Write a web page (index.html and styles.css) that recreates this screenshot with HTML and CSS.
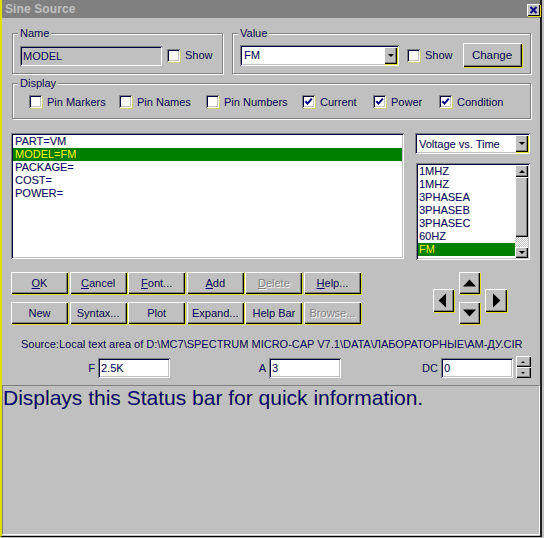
FILE: index.html
```html
<!DOCTYPE html>
<html>
<head>
<meta charset="utf-8">
<title>Sine Source</title>
<link rel="stylesheet" href="styles.css">
</head>
<body>
<div class="window">
  <div class="titlebar">
    <span class="title">Sine Source</span>
    <span class="close"><svg width="13" height="12" viewBox="0 0 13 12"><path d="M3.5 3 L9.5 9 M9.5 3 L3.5 9" stroke="#000080" stroke-width="2" fill="none"/></svg></span>
  </div>
  <div class="content">
    <div class="top-row">
      <div class="group name-group">
        <span class="legend">Name</span>
        <div class="group-body">
          <div class="field readonly name-field">MODEL</div>
          <span class="check"><span class="box"></span>Show</span>
        </div>
      </div>
      <div class="group value-group">
        <span class="legend">Value</span>
        <div class="group-body">
          <div class="combo value-combo"><span class="combo-text">FM</span><span class="drop"><span class="tri"></span></span></div>
          <span class="check value-check"><span class="box"></span>Show</span>
          <div class="btn change-btn">Change</div>
        </div>
      </div>
    </div>
    <div class="group display-group">
      <span class="legend">Display</span>
      <div class="display-checks">
        <span class="check"><span class="box"></span>Pin Markers</span>
        <span class="check"><span class="box"></span>Pin Names</span>
        <span class="check"><span class="box"></span>Pin Numbers</span>
        <span class="check"><span class="box checked"><svg width="13" height="13" viewBox="0 0 13 13"><path d="M3.3 6.2 L5.5 8.6 L9.8 3.6" stroke="#000080" stroke-width="2" fill="none"/></svg></span>Current</span>
        <span class="check"><span class="box checked"><svg width="13" height="13" viewBox="0 0 13 13"><path d="M3.3 6.2 L5.5 8.6 L9.8 3.6" stroke="#000080" stroke-width="2" fill="none"/></svg></span>Power</span>
        <span class="check"><span class="box checked"><svg width="13" height="13" viewBox="0 0 13 13"><path d="M3.3 6.2 L5.5 8.6 L9.8 3.6" stroke="#000080" stroke-width="2" fill="none"/></svg></span>Condition</span>
      </div>
    </div>
    <div class="mid-row">
      <div class="listbox main-list">
        <div class="item">PART=VM</div>
        <div class="item sel">MODEL=FM</div>
        <div class="item">PACKAGE=</div>
        <div class="item">COST=</div>
        <div class="item">POWER=</div>
      </div>
      <div class="right-col">
        <div class="combo plot-combo"><span class="combo-text">Voltage vs. Time</span><span class="drop"><span class="tri"></span></span></div>
        <div class="listbox model-list">
          <div class="model-items">
            <div class="item">1MHZ</div>
            <div class="item">1MHZ</div>
            <div class="item">3PHASEA</div>
            <div class="item">3PHASEB</div>
            <div class="item">3PHASEC</div>
            <div class="item">60HZ</div>
            <div class="item sel">FM</div>
            <div class="item">GENERAL</div>
          </div>
          <div class="scrollbar">
            <div class="sb-btn sb-up"><span class="tri tri-up"></span></div>
            <div class="sb-thumb"></div>
            <div class="sb-track"></div>
            <div class="sb-btn sb-down"><span class="tri"></span></div>
          </div>
        </div>
      </div>
    </div>
    <div class="btn-row">
      <div class="btn-grid">
        <div class="btn"><u>O</u>K</div>
        <div class="btn"><u>C</u>ancel</div>
        <div class="btn"><u>F</u>ont...</div>
        <div class="btn"><u>A</u>dd</div>
        <div class="btn disabled"><u>D</u>elete</div>
        <div class="btn"><u>H</u>elp...</div>
        <div class="btn">New</div>
        <div class="btn">Syntax...</div>
        <div class="btn">Plot</div>
        <div class="btn">Expand...</div>
        <div class="btn">Help Bar</div>
        <div class="btn disabled">Browse...</div>
      </div>
      <div class="arrows">
        <div class="btn arrow side"><svg width="21" height="23" viewBox="0 0 21 23"><polygon points="5.5,11.5 13,4.5 13,18.5" fill="#000"/></svg></div>
        <div class="arrow-col">
          <div class="btn arrow"><svg width="21" height="22" viewBox="0 0 21 22"><polygon points="4,14.5 17,14.5 10.5,7.5" fill="#000"/></svg></div>
          <div class="btn arrow"><svg width="21" height="22" viewBox="0 0 21 22"><polygon points="4,7.5 17,7.5 10.5,14.5" fill="#000"/></svg></div>
        </div>
        <div class="btn arrow side"><svg width="22" height="23" viewBox="0 0 22 23"><polygon points="15.5,11.5 8,4.5 8,18.5" fill="#000"/></svg></div>
      </div>
    </div>
    <div class="source">Source:Local text area of D:\MC7\SPECTRUM MICRO-CAP V7.1\DATA\ЛАБОРАТОРНЫЕ\АМ-ДУ.CIR</div>
    <div class="params">
      <div class="param param-f"><span class="plabel">F</span><div class="field pfield">2.5K</div></div>
      <div class="param param-a"><span class="plabel">A</span><div class="field pfield">3</div></div>
      <div class="param param-dc"><span class="plabel">DC</span><div class="field pfield">0</div>
        <div class="spinner">
          <div class="spin-btn"><span class="tri-s tri-s-up"></span></div>
          <div class="spin-btn"><span class="tri-s"></span></div>
        </div>
      </div>
    </div>
  </div>
  <div class="status">Displays this Status bar for quick information.</div>
</div>
</body>
</html>
```

FILE: styles.css
```css
* { box-sizing: border-box; }
html, body { margin: 0; padding: 0; }
body {
  width: 544px;
  height: 538px;
  overflow: hidden;
  background: #c0c0c0;
  font-family: "Liberation Sans", Arial, sans-serif;
  font-size: 11px;
  color: #000080;
}
.window {
  width: 542px;
  border-left: 2px solid #e0e000;
  border-right: 2px solid #202020;
  border-bottom: 1px solid #000;
  display: flex;
  flex-direction: column;
  text-shadow: 1px 0 0 rgba(230, 230, 0, 0.5);
}
.titlebar {
  height: 18px;
  background: #808080;
  display: flex;
  align-items: center;
  justify-content: space-between;
  padding: 0 0 0 3px;
}
.title {
  font-weight: bold;
  font-size: 12px;
  color: #c0c0c0;
  text-shadow: none;
  letter-spacing: 0.1px;
}
.close {
  width: 13px;
  height: 12px;
  margin-top: 2px;
  background: #c0c0c0;
  box-shadow: inset 1px 1px 0 #fff, inset -1px -1px 0 #000, 1px 1px 0 #e0e000;
  display: flex;
}
.content {
  padding: 15px 0 0 9px;
}

/* raised & sunken */
.btn {
  background: #c0c0c0;
  box-shadow: inset 1px 1px 0 #fff, inset -1px -1px 0 #000, inset -2px -2px 0 #808080, 1px 1px 0 rgba(230,230,0,0.8);
  display: flex;
  align-items: center;
  justify-content: center;
  height: 22px;
  white-space: nowrap;
}
.btn.disabled {
  color: #808080;
  text-shadow: 1px 1px 0 #fff;
}
.field, .listbox, .combo {
  box-shadow: inset 1px 1px 0 #808080, inset -1px -1px 0 #fff, inset 2px 2px 0 #000040, inset -2px -2px 0 #c0c0c0;
  background: #fff;
}

/* groups */
.group {
  border: 1px solid #808080;
  box-shadow: inset 1px 1px 0 #fff, 1px 1px 0 #fff;
  padding: 0 6px 0 7px;
}
.legend {
  display: block;
  width: fit-content;
  margin: -7px 0 0 -2px;
  padding: 0 2px;
  line-height: 13px;
  background: #c0c0c0;
}
.top-row {
  display: flex;
}
.name-group {
  width: 211px;
  margin-left: 1px;
  padding-bottom: 6px;
}
.value-group {
  width: 299px;
  margin-left: 9px;
  padding-bottom: 6px;
}
.group-body {
  display: flex;
  align-items: center;
  height: 24px;
  margin-top: 3px;
}
.name-field {
  width: 142px;
  height: 20px;
  margin-top: 2px;
  background: #c0c0c0;
  padding: 0 0 0 3px;
  line-height: 20px;
}
.check {
  display: flex;
  align-items: center;
  white-space: nowrap;
}
.name-group .check { margin-left: 5px; }
.box {
  width: 13px;
  height: 13px;
  flex: none;
  margin-right: 5px;
  background: #fff;
  box-shadow: inset 1px 1px 0 #808080, inset -1px -1px 0 #fff, inset 2px 2px 0 #000040, inset -2px -2px 0 #c0c0c0, 1px 1px 0 rgba(230,230,0,0.4);
  display: flex;
}
.combo {
  display: flex;
  align-items: center;
  justify-content: space-between;
  padding: 2px;
}
.combo-text {
  padding-left: 2px;
}
.value-combo {
  width: 159px;
  height: 21px;
}
.drop {
  width: 13px;
  height: 17px;
  background: #c0c0c0;
  box-shadow: inset 1px 1px 0 #fff, inset -1px -1px 0 #000, inset -2px -2px 0 #808080, 1px 1px 0 rgba(230,230,0,0.8);
  display: flex;
  align-items: center;
  justify-content: center;
}
.tri {
  width: 0;
  height: 0;
  border-left: 3.5px solid transparent;
  border-right: 3.5px solid transparent;
  border-top: 3.5px solid #000;
}
.tri-up {
  border-top: 0;
  border-bottom: 3.5px solid #000;
}
.value-check { margin-left: 8px; }
.change-btn {
  width: 59px;
  height: 24px;
  margin-left: 10px;
  font-size: 11.5px;
}

.display-group {
  width: 519px;
  margin: 9px 0 0 1px;
  padding-bottom: 10px;
}
.display-checks {
  display: grid;
  grid-template-columns: 90px 87px 96px 71px 66px auto;
  height: 13px;
  margin-top: 5px;
  padding-left: 9px;
}

/* lists */
.mid-row {
  display: flex;
  margin-top: 14px;
}
.listbox {
  padding: 2px;
  overflow: hidden;
}
.main-list {
  width: 393px;
  height: 126px;
}
.item {
  height: 13px;
  line-height: 13px;
  padding-left: 2px;
  white-space: nowrap;
}
.item.sel {
  background: #008000;
  color: #ffff00;
  text-shadow: 1px 0 0 rgba(0, 0, 128, 0.35);
}
.right-col {
  width: 115px;
  margin-left: 11px;
}
.plot-combo {
  width: 115px;
  height: 21px;
}
.model-list {
  width: 114px;
  height: 97px;
  margin: 9px 0 0 1px;
  display: flex;
}
.model-items {
  flex: 1;
  overflow: hidden;
}
.model-items .item { padding-left: 1px; }
.scrollbar {
  width: 13px;
  display: flex;
  flex-direction: column;
}
.sb-btn, .sb-thumb {
  background: #c0c0c0;
  box-shadow: inset 1px 1px 0 #fff, inset -1px -1px 0 #000, inset -2px -2px 0 #808080;
  display: flex;
  align-items: center;
  justify-content: center;
}
.sb-up { height: 12px; }
.sb-thumb { height: 60px; }
.sb-track {
  height: 10px;
  background-color: #fff;
  background-image: repeating-conic-gradient(#c0c0c0 0 25%, #fff 0 50%);
  background-size: 2px 2px;
}
.sb-down { height: 11px; }

/* buttons */
.btn-row {
  display: flex;
  margin-top: 12px;
}
.btn-grid {
  display: grid;
  grid-template-columns: repeat(6, 57px);
  grid-auto-rows: 22px;
  column-gap: 1.6px;
  row-gap: 8px;
}
.arrows {
  display: flex;
  align-items: center;
  gap: 5px;
  margin-left: 72px;
}
.arrow-col {
  display: flex;
  flex-direction: column;
  gap: 8px;
}
.arrow {
  width: 21px;
  height: 22px;
  display: block;
}
.arrow svg { display: block; }
.arrow.side {
  height: 23px;
  margin-top: 5px;
}
.arrows > .arrow.side:last-child { width: 22px; }

.source {
  margin-top: 13px;
  padding-left: 10px;
  line-height: 14px;
  white-space: nowrap;
}

/* params */
.params {
  display: flex;
  margin-top: 7px;
  height: 20px;
}
.param {
  display: flex;
  align-items: center;
  justify-content: flex-end;
  gap: 3px;
  height: 20px;
}
.param-f { width: 159px; }
.param-a { width: 171px; }
.param-dc { width: 190px; justify-content: flex-start; padding-left: 81px; }
.plabel { white-space: nowrap; }
.pfield {
  width: 72px;
  height: 20px;
  line-height: 20px;
  padding-left: 3px;
  font-size: 11px;
}
.spinner {
  width: 15px;
  height: 22px;
  margin: -2px 0 0 0;
  display: flex;
  flex-direction: column;
}
.spin-btn {
  height: 11px;
  background: #c0c0c0;
  box-shadow: inset 1px 1px 0 #fff, inset -1px -1px 0 #000, inset -2px -2px 0 #808080;
  display: flex;
  align-items: center;
  justify-content: center;
}
.tri-s {
  width: 0;
  height: 0;
  border-left: 2px solid transparent;
  border-right: 2px solid transparent;
  border-top: 2px solid #000;
}
.tri-s-up {
  border-top: 0;
  border-bottom: 2px solid #000;
}

/* status */
.status {
  height: 150px;
  margin-top: 7px;
  margin-bottom: 1px;
  border-top: 1px solid #808080;
  border-left: 1px solid #808080;
  border-right: 1px solid #fff;
  border-bottom: 1px solid #fff;
  font-size: 21px;
  line-height: 24px;
  padding-left: 0;
  color: #000080;
}
```
